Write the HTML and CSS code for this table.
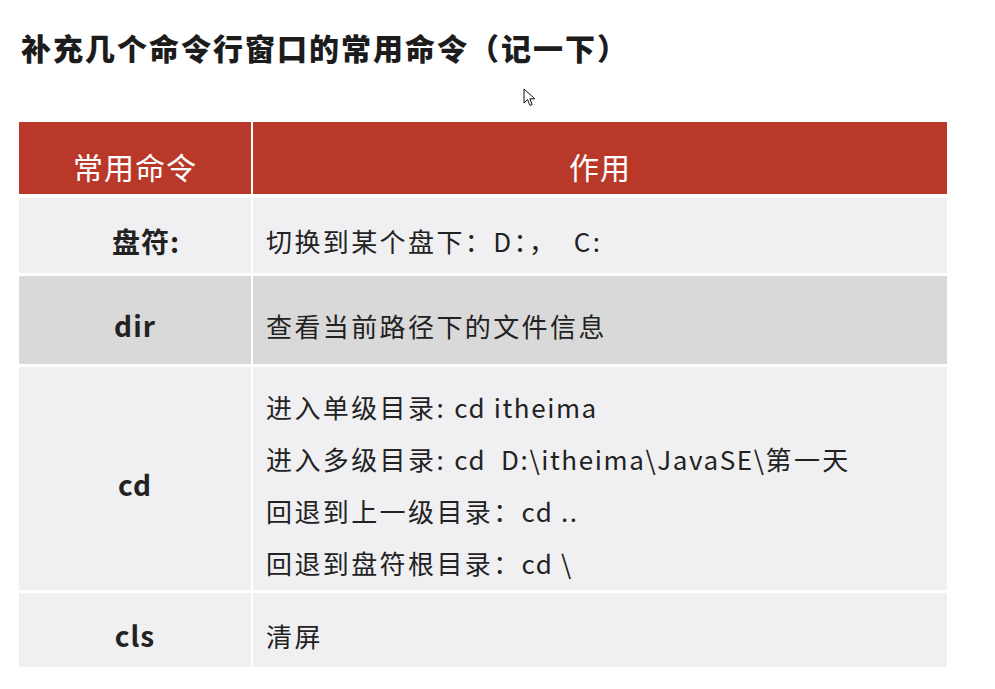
FILE: index.html
```html
<!DOCTYPE html>
<html lang="zh-CN">
<head>
<meta charset="utf-8">
<title>常用命令</title>
<link rel="stylesheet" href="styles.css">
</head>
<body>
<div class="page">
  <h1 class="title">补充几个命令行窗口的常用命令（记一下）</h1>
  <div class="cmd-table">
    <div class="cell head">常用命令</div>
    <div class="cell head">作用</div>

    <div class="cell key key-shift row-a">盘符:</div>
    <div class="cell desc row-a">切换到某个盘下：D：，&nbsp; C:</div>

    <div class="cell key row-b">dir</div>
    <div class="cell desc row-b">查看当前路径下的文件信息</div>

    <div class="cell key row-c">cd</div>
    <div class="cell desc row-c multi">
      <div>进入单级目录: <span class="latin">cd itheima</span></div>
      <div>进入多级目录: <span class="latin">cd&nbsp; D:\itheima\JavaSE\</span>第一天</div>
      <div>回退到上一级目录：<span class="latin">cd ..</span></div>
      <div>回退到盘符根目录：<span class="latin">cd \</span></div>
    </div>

    <div class="cell key row-d">cls</div>
    <div class="cell desc row-d">清屏</div>
  </div>
  <svg class="cursor" width="14" height="20" viewBox="0 0 14 20" aria-hidden="true">
    <path d="M1 1 L1 15 L4.5 11.5 L7 17.5 L9.2 16.5 L6.8 10.8 L11.8 10.8 Z" fill="#fff" stroke="#111" stroke-width="1" stroke-linejoin="round"/>
  </svg>
</div>
</body>
</html>
```

FILE: styles.css
```css
html, body {
  margin: 0;
  padding: 0;
  background: #ffffff;
}

.page {
  position: relative;
  width: 995px;
  height: 689px;
  font-family: "Noto Sans CJK SC", "Noto Sans", sans-serif;
  color: #222222;
}

.title {
  margin: 0;
  padding: 26px 0 0 21px;
  font-size: 30px;
  line-height: 42px;
  font-weight: 900;
  color: #1c1c1c;
  letter-spacing: 2px;
}

.cmd-table {
  margin: 54px 0 0 19px;
  width: 928px;
  display: grid;
  grid-template-columns: 232px 1fr;
  grid-template-rows: 73px 75px 88px 223px 74px;
  column-gap: 2px;
  row-gap: 3px;
}

.cell {
  display: flex;
  align-items: center;
  font-size: 26px;
  letter-spacing: 2.4px;
  padding-top: 10px;
  box-sizing: border-box;
}

.head {
  background: #b8392a;
  color: #ffffff;
  justify-content: center;
  font-weight: 400;
  font-size: 30px;
  letter-spacing: 1px;
  margin-bottom: 1px;
  padding-top: 16px;
}

.key {
  justify-content: center;
  font-weight: 700;
  font-size: 28px;
  letter-spacing: 1px;
}

.key-shift {
  padding-left: 22px;
}

.desc {
  padding-left: 13px;
}

.latin {
  letter-spacing: 1.6px;
}

.row-a, .row-c, .row-d {
  background: #f0f0f2;
}

.row-b {
  background: #d9d9d9;
}

.multi {
  flex-direction: column;
  align-items: flex-start;
  justify-content: center;
  line-height: 52px;
  padding-top: 12px;
}

.cursor {
  position: absolute;
  left: 523px;
  top: 88px;
}
```
